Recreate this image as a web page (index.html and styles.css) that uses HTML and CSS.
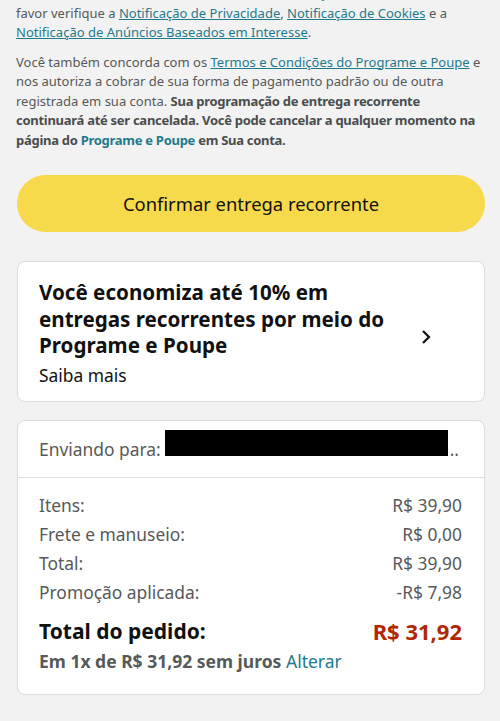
FILE: index.html
```html
<!DOCTYPE html>
<html lang="pt-BR">
<head>
  <meta charset="UTF-8" />
  <title>Programe e Poupe - Confirmar</title>
  <link rel="stylesheet" href="styles.css">
</head>
<body>
  <div class="legal">
    <p class="first">
      Ao confirmar, você concorda com as nossas <a href="#">Condições de Uso</a>. Para saber mais, por<br>
      favor verifique a <a href="#">Notificação de Privacidade</a>, <a href="#">Notificação de Cookies</a> e a<br>
      <a href="#">Notificação de Anúncios Baseados em Interesse</a>.
    </p>
    <p>
      Você também concorda com os <a href="#">Termos e Condições do Programe e Poupe</a> e<br>
      nos autoriza a cobrar de sua forma de pagamento padrão ou de outra<br>
      registrada em sua conta. <b>Sua programação de entrega recorrente<br>
      continuará até ser cancelada. Você pode cancelar a qualquer momento na<br>
      página do <span class="link-bold">Programe e Poupe</span> em Sua conta.</b>
    </p>
  </div>

  <div class="actions">
    <button class="btn-confirm">Confirmar entrega recorrente</button>
  </div>

  <!-- Cartão do programa -->
  <div class="card promo">
    <div class="promo-text">
      <h3>Você economiza até 10% em entregas recorrentes por meio do Programe e Poupe</h3>
      <div class="more">Saiba mais</div>
    </div>
    <svg class="chevron" width="12" height="16" viewBox="0 0 12 16">
      <path d="M3 2 L9 8 L3 14" fill="none" stroke="#111" stroke-width="2.2" />
    </svg>
  </div>

  <!-- Resumo do pedido -->
  <div class="card summary">
    <div class="ship">
      <span>Enviando para:</span>
      <span class="redacted"></span>
      <span>..</span>
    </div>
    <div class="totals">
      <div class="row"><span>Itens:</span><span>R$ 39,90</span></div>
      <div class="row"><span>Frete e manuseio:</span><span>R$ 0,00</span></div>
      <div class="row"><span>Total:</span><span>R$ 39,90</span></div>
      <div class="row"><span>Promoção aplicada:</span><span>-R$ 7,98</span></div>
      <div class="row grand"><span>Total do pedido:</span><span class="price">R$ 31,92</span></div>
      <div class="installments"><b>Em 1x de R$ 31,92 sem juros</b> <a href="#">Alterar</a></div>
    </div>
  </div>
</body>
</html>
```

FILE: styles.css
```css
body {
  margin: 0;
  font-family: 'Noto Sans', 'Open Sans', sans-serif;
  background: #f2f2f2;
  color: #565959;
  overflow: hidden;
}
a {
  color: #1f7a8c;
}
.legal {
  padding: 0 16px;
  font-size: 13px;
  line-height: 19.5px;
  white-space: nowrap;
}
.legal p {
  margin: 10px 0 0 0;
}
.legal p.first {
  margin-top: -16px;
}
.legal b {
  color: #4a4d4d;
  letter-spacing: -0.28px;
}
.link-bold {
  color: #1f7a8c;
}

.actions {
  padding: 25px 15px 0 17px;
}
.btn-confirm {
  display: block;
  width: 100%;
  height: 57px;
  border: none;
  border-radius: 29px;
  background-color: #f7d94c;
  color: #111;
  font-family: inherit;
  font-size: 18.4px;
}

.card {
  background: #ffffff;
  border: 1px solid #dcdcdc;
  border-radius: 8px;
  margin: 29px 15px 0 17px;
}
.promo {
  display: flex;
  align-items: center;
  padding: 17px 22px 14px 21px;
}
.promo-text {
  flex: 1;
}
.promo h3 {
  margin: 0;
  font-size: 20.6px;
  line-height: 26.5px;
  color: #111;
  max-width: 360px;
}
.more {
  margin-top: 4px;
  font-size: 17.4px;
  line-height: 24px;
  color: #111;
}
.chevron {
  margin-right: 30px;
  margin-top: 8px;
}

.summary {
  margin-top: 18px;
}
.ship {
  display: flex;
  align-items: center;
  padding: 16px 22px 16px 21px;
  font-size: 17.4px;
  line-height: 24px;
  border-bottom: 1px solid #dcdcdc;
}
.redacted {
  align-self: flex-start;
  display: inline-block;
  width: 283px;
  height: 26px;
  background: #000;
  margin: -7px 2px 0 4px;
}
.totals {
  padding: 13px 22px 20px 21px;
}
.row {
  display: flex;
  justify-content: space-between;
  font-size: 17.4px;
  line-height: 29px;
}
.row.grand {
  margin-top: 9px;
  font-size: 21px;
  line-height: 30px;
  font-weight: bold;
  color: #111;
}
.price {
  color: #b12704;
  font-size: 22px;
}
.installments {
  margin-top: 2px;
  font-size: 17.5px;
  line-height: 26px;
}
.installments a {
  text-decoration: none;
}
```
